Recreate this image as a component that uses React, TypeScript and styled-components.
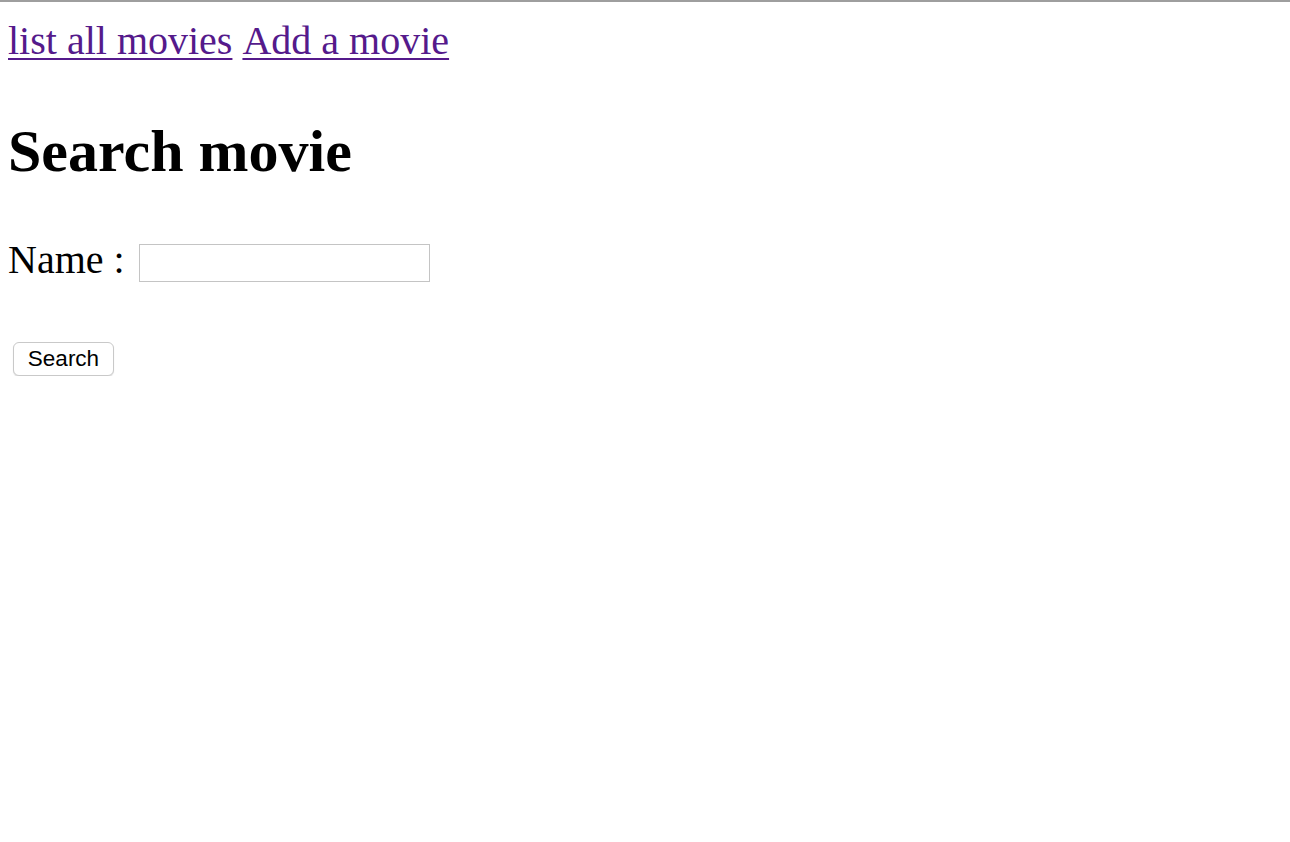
import React from 'react';
import styled, { createGlobalStyle } from 'styled-components';

const GlobalStyle = createGlobalStyle`
  html, body {
    margin: 0;
    padding: 0;
    background: #ffffff;
  }
  body {
    font-family: "Liberation Serif", "Times New Roman", serif;
    color: #000000;
  }
`

const TopRule = styled.div`
  height: 2px;
  background-color: #9e9e9e;
`
const Page = styled.div`
  padding: 16px 8px 0 8px;
`
const Nav = styled.nav`
  display: flex;
  gap: 10px;
  font-size: 40px;
  line-height: 46px;
`
const NavLink = styled.a`
  color: #551a8b;
  text-decoration: underline;
  text-underline-offset: 4px;
  text-decoration-thickness: 2px;
`
const Title = styled.h1`
  margin: 53px 0 0 0;
  font-size: 60px;
  line-height: 69px;
  font-weight: bold;
`
const Form = styled.form`
  display: flex;
  flex-direction: column;
  align-items: flex-start;
`
const Row = styled.div`
  display: flex;
  align-items: flex-start;
  margin-top: 51px;
`
const Label = styled.label`
  font-size: 40px;
  line-height: 46px;
  margin-right: 14px;
`
const Input = styled.input`
  box-sizing: border-box;
  width: 291px;
  height: 38px;
  margin-top: 7px;
  border: 1px solid #c4c4c4;
  background: #ffffff;
  padding: 0 6px;
  font-size: 20px;
  outline: none;
`
const Button = styled.button`
  box-sizing: border-box;
  margin: 59px 0 0 5px;
  width: 101px;
  height: 34px;
  background: #ffffff;
  border: 1px solid #c9c9c9;
  border-radius: 6px;
  box-shadow: 0 1px 1px rgba(0, 0, 0, 0.12);
  font-family: "Liberation Sans", Arial, sans-serif;
  font-size: 22.5px;
  color: #000000;
  padding: 0;
  cursor: pointer;
`

export default function App() {
  return (
    <>
      <GlobalStyle />
      <TopRule />
      <Page>
        <Nav>
          <NavLink href="#">list all movies</NavLink>
          <NavLink href="#">Add a movie</NavLink>
        </Nav>
        <Title>Search movie</Title>
        <Form onSubmit={(e) => e.preventDefault()}>
          <Row>
            <Label htmlFor="name">Name :</Label>
            <Input id="name" name="name" type="text" />
          </Row>
          <Button type="submit">Search</Button>
        </Form>
      </Page>
    </>
  );
}
